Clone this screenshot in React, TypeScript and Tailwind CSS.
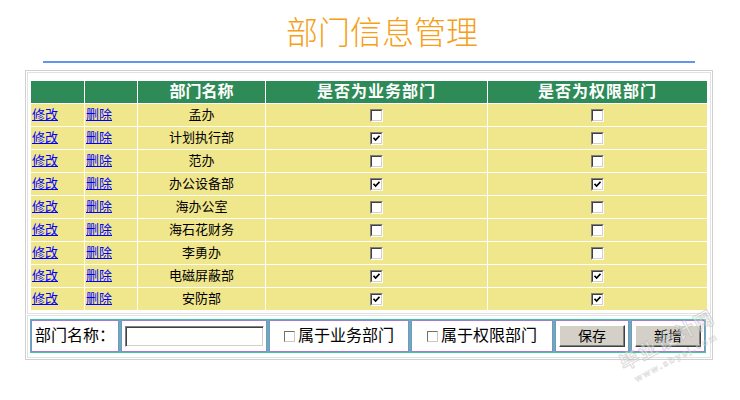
import React from "react"

const rows = [
  { name: "孟办", biz: false, auth: false },
  { name: "计划执行部", biz: true, auth: false },
  { name: "范办", biz: false, auth: false },
  { name: "办公设备部", biz: true, auth: true },
  { name: "海办公室", biz: false, auth: false },
  { name: "海石花财务", biz: false, auth: false },
  { name: "李勇办", biz: false, auth: false },
  { name: "电磁屏蔽部", biz: true, auth: true },
  { name: "安防部", biz: true, auth: true },
]

function ClassicCheck({ checked }: { checked: boolean }) {
  return (
    <span className="inline-block w-[13px] h-[13px] border border-t-[#808080] border-l-[#808080] border-b-white border-r-white">
      <span className="flex w-full h-full items-center justify-center bg-white border border-t-[#404040] border-l-[#404040] border-b-[#d4d0c8] border-r-[#d4d0c8]">
        {checked && (
          <svg width="7" height="7" viewBox="0 0 7 7">
            <path d="M0.5 2.8 L2.6 5 L6.5 0.8" fill="none" stroke="#000" strokeWidth="1.6" />
          </svg>
        )}
      </span>
    </span>
  )
}

function FormCell({ w, children, className = "" }: { w: string; children: React.ReactNode; className?: string }) {
  return (
    <div
      className={`${w} h-[34px] flex items-center border border-[#3cc8a0] shadow-[inset_0_0_0_1px_#a878d8] ${className}`}
    >
      {children}
    </div>
  )
}

function SmallBox({ label }: { label: string }) {
  return (
    <span className="flex items-center gap-[3px] text-[16px] text-black">
      <span className="inline-block w-[11px] h-[11px] bg-white border border-t-[#707070] border-l-[#707070] border-b-[#c8c8c8] border-r-[#c8c8c8]" />
      {label}
    </span>
  )
}

function Button({ label }: { label: string }) {
  return (
    <button className="w-[66px] h-[22px] bg-[#d4d0c8] border border-t-white border-l-white border-b-[#404040] border-r-[#404040] shadow-[inset_-1px_-1px_0_#808080] text-[14px] leading-none text-black">
      {label}
    </button>
  )
}

export default function App() {
  return (
    <div className="relative w-[740px] h-[400px] overflow-hidden bg-white font-['Liberation_Sans','Noto_Sans_CJK_SC',sans-serif]">
      <div className="pt-[14px] pl-[24px] flex justify-center">
        <h1 className="text-[32px] leading-[32px] font-light text-[#f5a01a] font-['Noto_Sans_CJK_SC',sans-serif]">
          部门信息管理
        </h1>
      </div>
      <div className="ml-[43px] mt-[15px] w-[652px] h-[2px] bg-[#6495ed]" />

      <div className="ml-[25px] mt-[7px] w-[688px] border border-[#d0d0d0] p-px flex flex-col gap-px">
        <div className="border border-[#e2e2e2] pt-[8px] pl-[3px] pr-[1px] pb-[3px]">
          <div className="grid grid-cols-[53px_52px_127px_221px_219px] auto-rows-[22px] gap-px bg-white">
            <div className="bg-[#2e8b57]" />
            <div className="bg-[#2e8b57]" />
            <div className="bg-[#2e8b57] flex items-center justify-center text-white font-bold text-[16px]">部门名称</div>
            <div className="bg-[#2e8b57] flex items-center justify-center text-white font-bold text-[16px] tracking-[1px]">是否为业务部门</div>
            <div className="bg-[#2e8b57] flex items-center justify-center text-white font-bold text-[16px] tracking-[1px]">是否为权限部门</div>
            {rows.map((r) => (
              <React.Fragment key={r.name}>
                <div className="bg-[#f0e68c] flex items-center pl-px">
                  <a href="#" className="text-[13px] text-[#0000ff] underline">修改</a>
                </div>
                <div className="bg-[#f0e68c] flex items-center pl-px">
                  <a href="#" className="text-[13px] text-[#0000ff] underline">删除</a>
                </div>
                <div className="bg-[#f0e68c] flex items-center justify-center text-[13px] text-black">{r.name}</div>
                <div className="bg-[#f0e68c] flex items-center justify-center">
                  <ClassicCheck checked={r.biz} />
                </div>
                <div className="bg-[#f0e68c] flex items-center justify-center">
                  <ClassicCheck checked={r.auth} />
                </div>
              </React.Fragment>
            ))}
          </div>
        </div>

        <div className="border border-[#e2e2e2] pt-[3px] pl-[2px] pr-[2px] pb-[4px]">
          <div className="flex">
            <FormCell w="w-[90px]" className="pl-[4px] text-[16px] text-black">部门名称：</FormCell>
            <FormCell w="w-[148px]" className="justify-center">
              <input
                type="text"
                className="w-[139px] h-[21px] bg-white border border-t-[#808080] border-l-[#808080] border-b-white border-r-white shadow-[inset_1px_1px_0_#404040,inset_-1px_-1px_0_#d4d0c8] outline-none"
              />
            </FormCell>
            <FormCell w="w-[142px]" className="justify-center">
              <SmallBox label="属于业务部门" />
            </FormCell>
            <FormCell w="w-[144px]" className="justify-center">
              <SmallBox label="属于权限部门" />
            </FormCell>
            <FormCell w="w-[76px]" className="justify-center">
              <Button label="保存" />
            </FormCell>
            <FormCell w="w-[76px]" className="justify-center">
              <Button label="新增" />
            </FormCell>
          </div>
        </div>
      </div>

      <div className="pointer-events-none absolute left-[618px] top-[328px] -rotate-[28deg] flex flex-col items-center gap-[6px] opacity-50">
        <span className="text-[19px] leading-[20px] font-bold text-white tracking-[2px] [-webkit-text-stroke:1px_#b8b8b8] font-['Noto_Sans_CJK_SC',sans-serif]">毕业设计网</span>
        <span className="text-[9px] leading-[10px] font-bold text-white tracking-[2px] [-webkit-text-stroke:0.6px_#b8b8b8]">www.sbysj.com</span>
      </div>
    </div>
  )
}
